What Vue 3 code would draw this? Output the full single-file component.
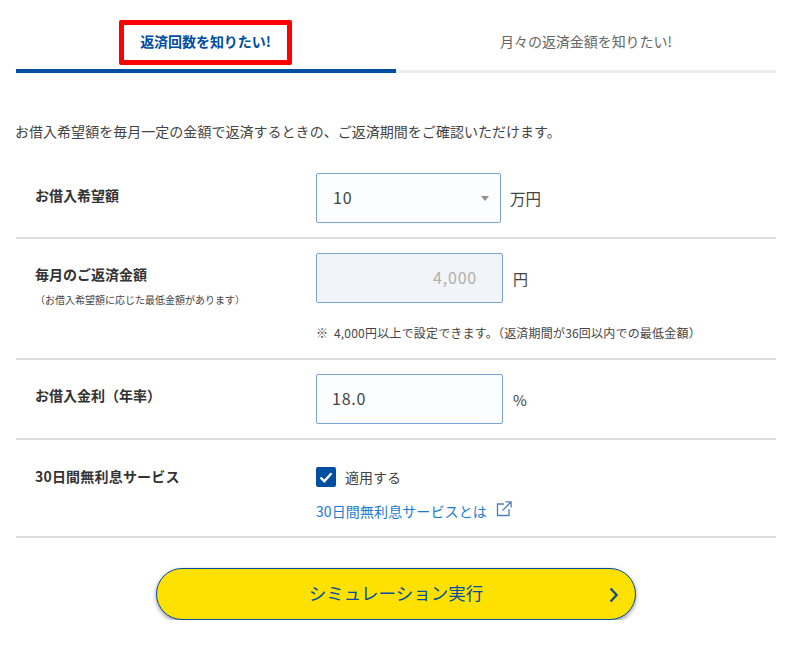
<script setup>
import { ref } from 'vue';

const activeTab = ref(0);
const tabs = ['返済回数を知りたい!', '月々の返済金額を知りたい!'];
const amount = ref('10');
const rate = ref('18.0');
const useFree = ref(true);
</script>

<template>
  <div class="page">
    <div class="tabs">
      <div
        v-for="(tab, i) in tabs"
        :key="tab"
        class="tab"
        :class="{ active: activeTab === i }"
      >
        <span class="tab-label">{{ tab }}</span>
      </div>
    </div>

    <p class="lead">お借入希望額を毎月一定の金額で返済するときの、ご返済期間をご確認いただけます。</p>

    <div class="row row-first">
      <div class="label">お借入希望額</div>
      <div class="field">
        <div class="line">
          <div class="select">
            <span>{{ amount }}</span>
            <i class="caret"></i>
          </div>
          <span class="unit">万円</span>
        </div>
      </div>
    </div>

    <div class="row row-pay">
      <div class="label">
        毎月のご返済金額
        <small>（お借入希望額に応じた最低金額があります）</small>
      </div>
      <div class="field">
        <div class="line">
          <div class="input disabled"><span>4,000</span></div>
          <span class="unit wide">円</span>
        </div>
        <p class="note">※&nbsp; 4,000円以上で設定できます。（返済期間が36回以内での最低金額）</p>
      </div>
    </div>

    <div class="row row-rate">
      <div class="label">お借入金利（年率）</div>
      <div class="field">
        <div class="line">
          <div class="input"><span>{{ rate }}</span></div>
          <span class="unit wide">%</span>
        </div>
      </div>
    </div>

    <div class="row row-free">
      <div class="label">30日間無利息サービス</div>
      <div class="field">
        <label class="check">
          <span class="box" :class="{ on: useFree }">
            <svg viewBox="0 0 20 20" width="20" height="20">
              <path d="M4.5 10.5l3.8 3.7 7.2-8" fill="none" stroke="#fff" stroke-width="2.4" />
            </svg>
          </span>
          適用する
        </label>
        <a class="link" href="#">
          30日間無利息サービスとは
          <svg viewBox="0 0 16 16" width="16" height="16">
            <path d="M8 3H1.5v11.5H13V8" fill="none" stroke="#4a80c0" stroke-width="1.3" />
            <path d="M6.5 9.5L15 1M9.5 0.9h5.6v5.6" fill="none" stroke="#4a80c0" stroke-width="1.3" />
          </svg>
        </a>
      </div>
    </div>

    <div class="actions">
      <button class="submit" type="button">
        <span>シミュレーション実行</span>
        <svg class="chevron" viewBox="0 0 10 16" width="10" height="16">
          <path d="M1.6 1.5L7.6 8 1.6 14.5" fill="none" stroke="#1a4c8c" stroke-width="2.4" />
        </svg>
      </button>
    </div>
  </div>
</template>

<style scoped>
.page {
  width: 760px;
  margin-left: 16px;
  color: #333;
  font-family: "Noto Sans CJK JP", "Noto Sans", sans-serif;
  font-size: 14px;
}
.tabs {
  display: flex;
  height: 73px;
}
.tab {
  flex: 1;
  display: flex;
  align-items: flex-start;
  justify-content: center;
  border-bottom: 3px solid #eee;
  color: #666;
  font-size: 14px;
  padding-top: 20px;
}
.tab-label {
  height: 45px;
  line-height: 43px;
  letter-spacing: -0.05px;
}
.tab.active {
  border-bottom: 4px solid #004ea2;
  color: #004ea2;
  font-weight: 700;
}
.tab.active .tab-label {
  box-sizing: border-box;
  width: 173px;
  margin-right: 1px;
  border: 5px solid #f00;
  border-radius: 2px;
  line-height: 33px;
  text-align: center;
  white-space: nowrap;
}
.lead {
  margin: 47px 0 0;
  height: 22px;
  line-height: 22px;
  margin-left: -1px;
  letter-spacing: 0.03px;
  color: #444;
}
.row {
  display: grid;
  grid-template-columns: 300px 1fr;
  border-bottom: 2px solid #ddd;
}
.row-first {
  margin-top: 31px;
  padding-bottom: 14px;
}
.row-pay {
  padding: 14px 0 14px;
}
.row-rate {
  padding: 14px 0;
}
.row-free {
  padding: 27px 0 15px;
}
.label {
  padding-left: 19px;
  font-weight: 700;
  color: #333;
  line-height: 20px;
}
.row-first .label {
  padding-top: 12px;
}
.row-pay .label {
  padding-top: 11px;
}
.row-rate .label {
  padding-top: 11px;
}
.row-free .label {
  padding-top: 0;
  margin-top: -1px;
  letter-spacing: 0.2px;
}
.label small {
  display: block;
  margin-top: 9px;
  font-size: 10px;
  font-weight: 400;
  color: #444;
  line-height: 14px;
}
.line {
  display: flex;
  align-items: center;
}
.select,
.input {
  box-sizing: border-box;
  height: 50px;
  border: 1px solid #7ba3d8;
  border-radius: 2px;
  background: #fbfdff;
  font-size: 16px;
  color: #444;
  display: flex;
  align-items: center;
}
.select span,
.input span {
  position: relative;
  top: -1px;
  letter-spacing: 0.8px;
}
.select {
  width: 185px;
  padding: 0 11px 0 16px;
  justify-content: space-between;
}
.caret {
  width: 0;
  height: 0;
  border-left: 4px solid transparent;
  border-right: 4px solid transparent;
  border-top: 5px solid #9a8f88;
}
.input {
  width: 187px;
  padding: 0 15px;
}
.input.disabled {
  justify-content: flex-end;
  padding-right: 25px;
  background: #f1f4f9;
  color: #b5aea9;
}
.unit {
  margin-left: 9px;
  font-size: 15.5px;
  color: #444;
}
.unit.wide {
  margin-left: 10px;
  font-size: 15px;
}
.note {
  margin: 19px 0 0;
  font-size: 12px;
  line-height: 22px;
  letter-spacing: 0.2px;
  color: #444;
}
.check {
  display: flex;
  align-items: center;
  gap: 9px;
  height: 20px;
  color: #444;
}
.box {
  width: 20px;
  height: 20px;
  border-radius: 2px;
  background: #ccc;
}
.box svg {
  display: block;
}
.box.on {
  background: #004ea2;
}
.link {
  display: flex;
  align-items: center;
  gap: 9px;
  margin-top: 14px;
  height: 20px;
  letter-spacing: 0.1px;
  color: #1a7ad4;
  text-decoration: none;
}
.link svg {
  margin-top: -4px;
}
.actions {
  display: flex;
  justify-content: center;
  margin-top: 30px;
}
.submit {
  position: relative;
  box-sizing: border-box;
  width: 480px;
  height: 52px;
  padding-bottom: 5px;
  border: 1px solid #004ea2;
  border-radius: 26px;
  background: #ffe100;
  color: #004ea2;
  font: inherit;
  font-size: 17.5px;
  box-shadow: 0 2px 4px rgba(0, 0, 0, 0.4);
}
.chevron {
  position: absolute;
  right: 16px;
  top: 18px;
}
</style>
